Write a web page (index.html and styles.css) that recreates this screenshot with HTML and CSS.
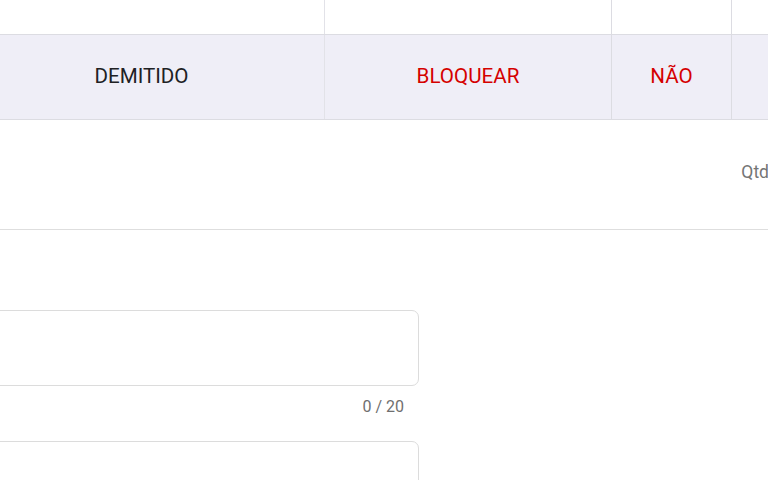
FILE: index.html
```html
<!DOCTYPE html>
<html lang="pt">
<head>
<meta charset="utf-8">
<link rel="stylesheet" href="styles.css">
</head>
<body>
<div class="page">
  <div class="table">
    <div class="row row-top">
      <div class="cell c1"></div>
      <div class="cell c2"></div>
      <div class="cell c3"></div>
      <div class="cell c4"></div>
    </div>
    <div class="row row-hl">
      <div class="cell c1">DEMITIDO</div>
      <div class="cell c2 red">BLOQUEAR</div>
      <div class="cell c3 red">NÃO</div>
      <div class="cell c4"></div>
    </div>
  </div>
  <div class="section">
    <span class="qtd">Qtd</span>
  </div>
  <div class="form">
    <div class="field"><div class="box"></div><div class="counter">0 / 20</div></div>
    <div class="field"><div class="box"></div></div>
  </div>
</div>
</body>
</html>
```
FILE: styles.css
```css
html, body {
  margin: 0;
  padding: 0;
  background: #ffffff;
  overflow: hidden;
}
body {
  width: 768px;
  height: 480px;
  font-family: Roboto, "Liberation Sans", sans-serif;
}
.page {
  width: 768px;
  height: 480px;
  overflow: hidden;
}
.table {
  margin-left: -41px;
  width: 900px;
}
.row {
  display: grid;
  grid-template-columns: 366px 287px 120px 1fr;
  border-bottom: 1px solid #dcdce2;
}
.row-top {
  height: 34px;
}
.row-hl {
  height: 84px;
  background: #efeef7;
}
.cell {
  display: flex;
  align-items: center;
  justify-content: center;
  border-right: 1px solid #dcdce2;
  font-size: 20.6px;
  color: #202124;
  padding-bottom: 2px;
  box-sizing: border-box;
}
.cell.c1 {
  border-right-color: #e2e2e8;
}
.red {
  color: #d50000;
}
.section {
  height: 109px;
  border-bottom: 1px solid #dedede;
  display: flex;
  justify-content: flex-end;
  align-items: center;
  overflow: hidden;
}
.qtd {
  font-size: 17.5px;
  color: #757575;
  margin-right: -1px;
  padding-bottom: 6px;
  white-space: nowrap;
}
.form {
  padding-top: 80px;
  width: 419px;
}
.field {
  margin-left: -20px;
}
.box {
  height: 74px;
  border: 1px solid #dcdcdc;
  border-radius: 7px;
}
.counter {
  text-align: right;
  font-size: 16px;
  color: #6f6f6f;
  padding: 11px 15px 0 0;
  height: 55px;
  box-sizing: border-box;
}
```
